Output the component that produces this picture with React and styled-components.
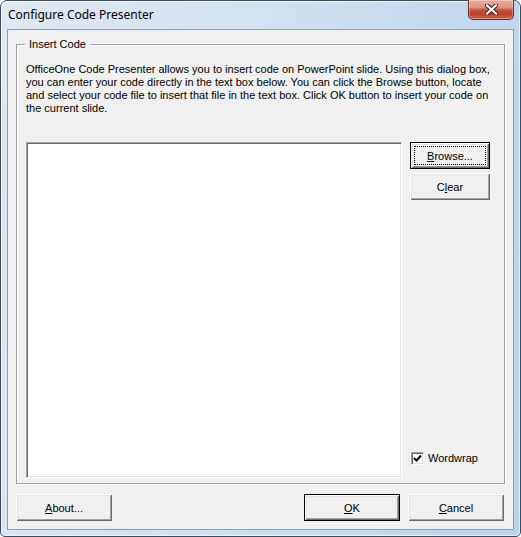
import styled, { createGlobalStyle } from "styled-components";

const GlobalStyle = createGlobalStyle`
  html, body {
    margin: 0;
    padding: 0;
    background: #fff;
  }
  * {
    box-sizing: border-box;
  }
`;

export default function App() {
    return (
        <>
            <GlobalStyle />
            <Window>
                <TitleBar>
                    <Caption>Configure Code Presenter</Caption>
                    <CloseButton aria-label="Close">
                        <svg width="13" height="11" viewBox="0 0 13 11">
                            <path d="M2 1.5 L11 9.5 M11 1.5 L2 9.5" stroke="#40201a" strokeWidth="4.2" strokeLinecap="square" />
                            <path d="M2 1.5 L11 9.5 M11 1.5 L2 9.5" stroke="#fff" strokeWidth="2.2" strokeLinecap="square" />
                        </svg>
                    </CloseButton>
                </TitleBar>
                <Client>
                    <GroupBox>
                        <Legend>Insert Code</Legend>
                        <Description>
                            OfficeOne Code Presenter allows you to insert code on PowerPoint slide. Using this dialog box,
                            <br />
                            you can enter your code directly in the text box below. You can click the Browse button, locate
                            <br />
                            and select your code file to insert that file in the text box. Click OK button to insert your code on
                            <br />
                            the current slide.
                        </Description>
                        <Body>
                            <CodeBox spellCheck={false} />
                            <Side>
                                <Button $default $focused>
                                    <u>B</u>rowse...
                                </Button>
                                <Button>
                                    C<u>l</u>ear
                                </Button>
                                <CheckRow>
                                    <CheckBox>
                                        <svg width="9" height="9" viewBox="0 0 9 9">
                                            <path d="M1 4 L3.5 6.5 L8 1.5" fill="none" stroke="#000" strokeWidth="1.9" />
                                        </svg>
                                    </CheckBox>
                                    Wordwrap
                                </CheckRow>
                            </Side>
                        </Body>
                    </GroupBox>
                    <Footer>
                        <Button $wide className="about">
                            <u>A</u>bout...
                        </Button>
                        <Button $wide $default>
                            <u>O</u>K
                        </Button>
                        <Button $wide>
                            <u>C</u>ancel
                        </Button>
                    </Footer>
                </Client>
            </Window>
        </>
    );
}

const Window = styled.div`
    width: 521px;
    height: 537px;
    display: flex;
    flex-direction: column;
    padding: 0 6px 6px;
    border: 1px solid #3b4c5e;
    border-radius: 7px 7px 5px 5px;
    background: linear-gradient(100deg, #e0e8f0 0%, #d4e2f1 40%, #c4d8ef 75%, #bad2ee 100%);
    box-shadow: inset 1px 1px rgba(255, 255, 255, 0.7), inset -1px -1px rgba(255, 255, 255, 0.6);
    font-family: "Liberation Sans", Arial, sans-serif;
    font-size: 11px;
    color: #000;
`;

const TitleBar = styled.div`
    height: 28px;
    display: flex;
    align-items: flex-start;
    justify-content: space-between;
`;

const Caption = styled.span`
    padding: 6px 0 0 1px;
    font-family: "Noto Sans", sans-serif;
    font-size: 12px;
    line-height: 16px;
`;

const CloseButton = styled.div`
    width: 46px;
    height: 20px;
    margin-top: -1px;
    display: flex;
    align-items: center;
    justify-content: center;
    border: 1px solid #6b2d24;
    border-top: none;
    border-radius: 0 0 5px 5px;
    background: linear-gradient(#eab1a3 0%, #dc8e7e 40%, #c4503e 52%, #b9412d 75%, #d2644f 100%);
    box-shadow: inset 0 0 0 1px rgba(255, 255, 255, 0.3);
`;

const Client = styled.div`
    flex: 1;
    display: flex;
    flex-direction: column;
    background: #f0f0f0;
    border: 1px solid #8d9fb3;
    padding: 14px 8px 8px;
`;

const GroupBox = styled.section`
    flex: 1;
    display: flex;
    flex-direction: column;
    border: 1px solid #a0a0a0;
    box-shadow: inset 1px 1px #fff, 1px 1px #fff;
    padding: 0 14px 5px 9px;
`;

const Legend = styled.span`
    align-self: flex-start;
    margin: -7px 0 0 -1px;
    padding: 0 4px;
    line-height: 13px;
    background: #f0f0f0;
`;

const Description = styled.p`
    margin: 12px 0 0;
    line-height: 13px;
    white-space: nowrap;
`;

const Body = styled.div`
    flex: 1;
    margin-top: 27px;
    display: grid;
    grid-template-columns: 1fr 80px;
    gap: 8px;
`;

const CodeBox = styled.textarea`
    resize: none;
    margin: 0;
    padding: 3px;
    background: #fff;
    border: 1px solid;
    border-color: #a0a0a0 #fff #fff #a0a0a0;
    box-shadow: inset 1px 1px #696969, inset -1px -1px #e3e3e3;
    font: 11px "Liberation Mono", monospace;
    outline: none;
`;

const Side = styled.div`
    display: flex;
    flex-direction: column;
    gap: 4px;
`;

const Button = styled.button`
    width: ${(p) => (p.$wide ? "96px" : "80px")};
    height: 27px;
    padding: 0;
    background: #f0f0f0;
    font: 11px "Liberation Sans", Arial, sans-serif;
    color: #000;
    border: ${(p) => (p.$default ? "1px solid #000" : "none")};
    box-shadow: inset 1px 1px #fff, inset -1px -1px #696969, inset 2px 2px #e3e3e3, inset -2px -2px #a0a0a0;
    outline: ${(p) => (p.$focused ? "1px dotted #000" : "none")};
    outline-offset: -5px;

    &.about {
        margin-right: auto;
    }
`;

const CheckRow = styled.label`
    margin: auto 0 13px 1px;
    display: flex;
    align-items: center;
    gap: 4px;
    line-height: 13px;
`;

const CheckBox = styled.span`
    width: 13px;
    height: 13px;
    display: flex;
    align-items: center;
    justify-content: center;
    background: #fff;
    border: 1px solid;
    border-color: #a0a0a0 #fff #fff #a0a0a0;
    box-shadow: inset 1px 1px #696969, inset -1px -1px #e3e3e3;
`;

const Footer = styled.div`
    margin-top: 10px;
    padding-right: 1px;
    display: flex;
    gap: 8px;
`;
